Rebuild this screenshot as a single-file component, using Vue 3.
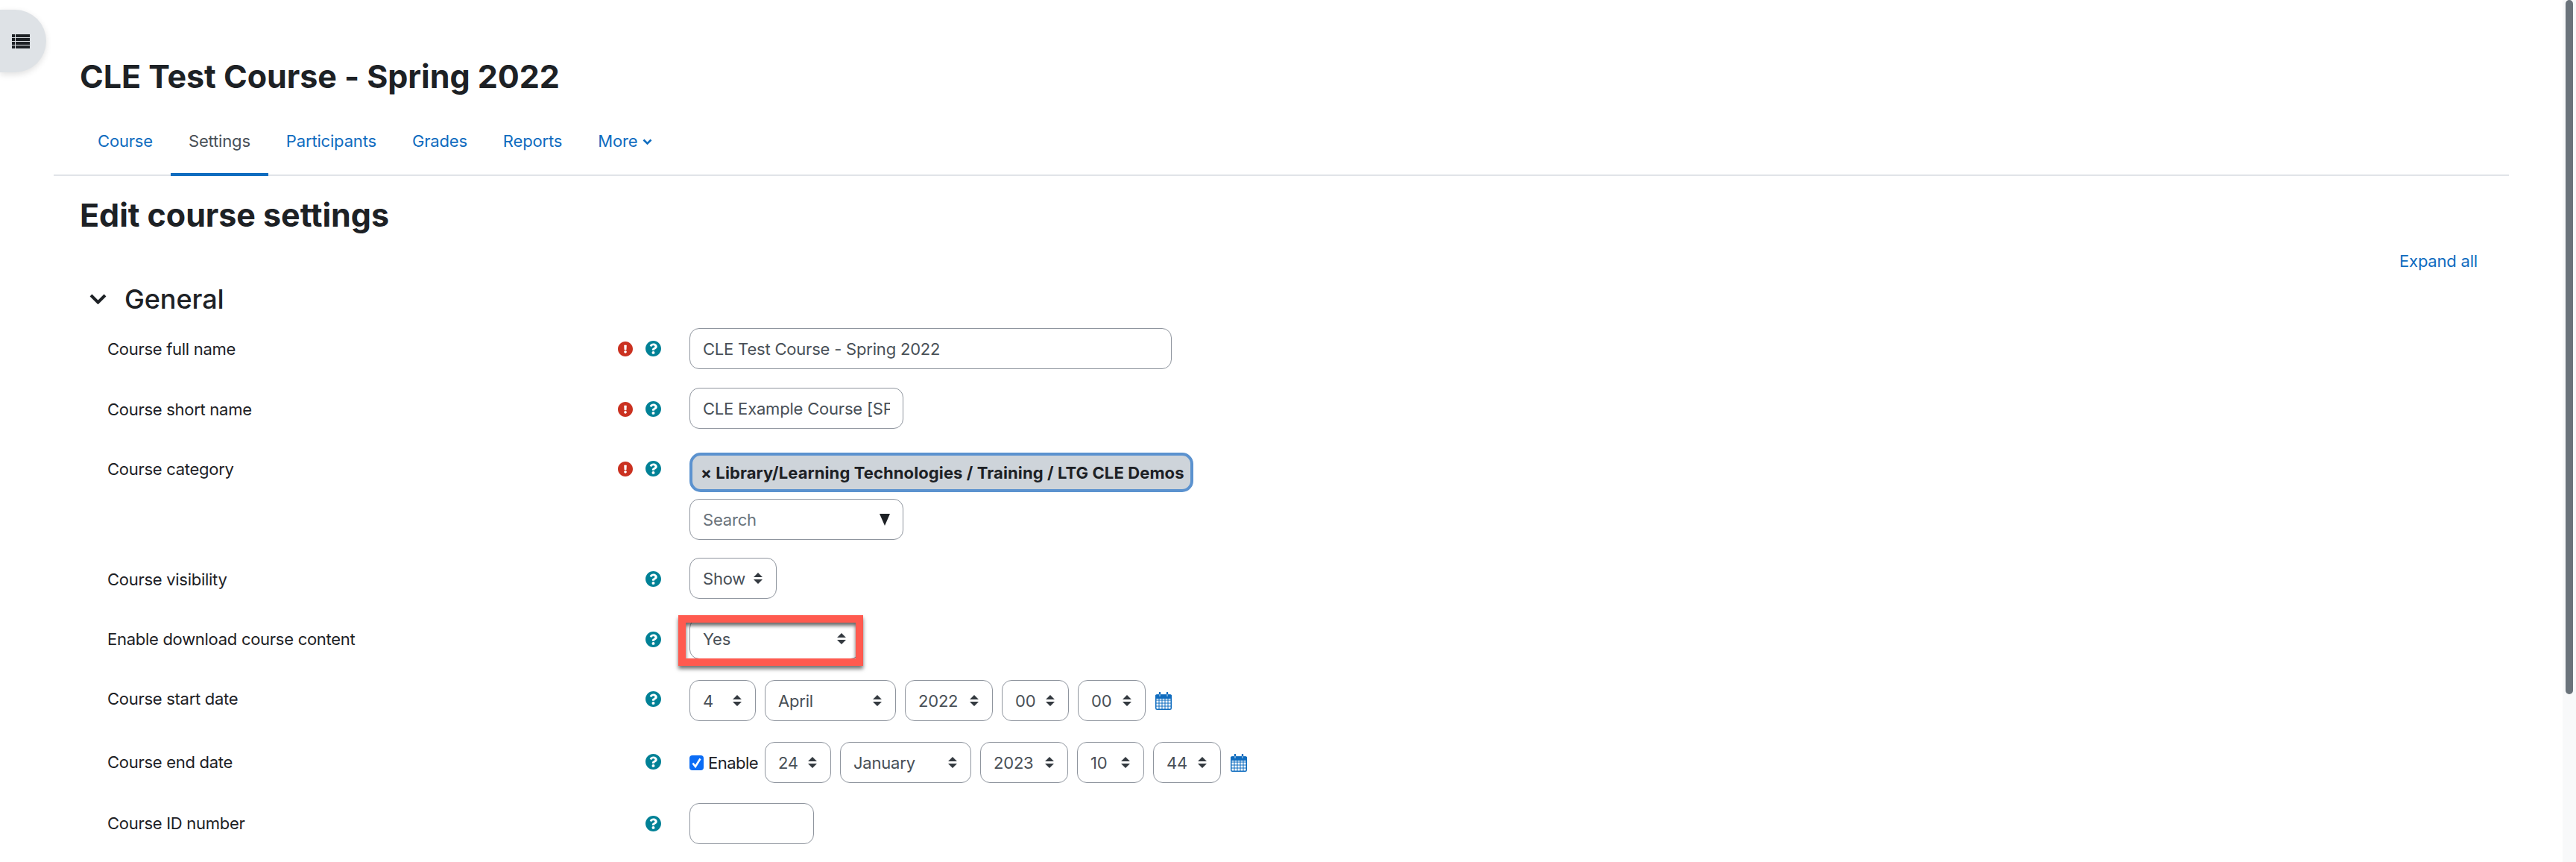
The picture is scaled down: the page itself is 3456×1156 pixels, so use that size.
<script setup>
const tabs = [
  { text: 'Course' },
  { text: 'Settings', active: true },
  { text: 'Participants' },
  { text: 'Grades' },
  { text: 'Reports' },
]
const helpPath = 'M504 256c0 136.997-111.043 248-248 248S8 392.997 8 256C8 119.083 119.043 8 256 8s248 111.083 248 248zM262.655 90c-54.497 0-89.255 22.957-116.549 63.758-3.536 5.286-2.353 12.415 2.715 16.258l34.699 26.31c5.205 3.947 12.621 3.008 16.665-2.122 17.864-22.658 30.113-35.797 57.303-35.797 20.429 0 45.698 13.148 45.698 32.958 0 14.976-12.363 22.667-32.534 33.976C247.128 238.528 216 254.941 216 296v4c0 6.627 5.373 12 12 12h56c6.627 0 12-5.373 12-12v-1.333c0-28.462 83.186-29.647 83.186-106.667 0-58.002-60.165-102-116.531-102zM256 338c-25.365 0-46 20.635-46 46 0 25.364 20.635 46 46 46s46-20.636 46-46c0-25.365-20.635-46-46-46z'
const reqPath = 'M504 256c0 136.997-111.043 248-248 248S8 392.997 8 256C8 119.083 119.043 8 256 8s248 111.083 248 248zm-248 50c-25.405 0-46 20.595-46 46s20.595 46 46 46 46-20.595 46-46-20.595-46-46-46zm-43.673-165.346l7.418 136c.347 6.364 5.609 11.346 11.982 11.346h48.546c6.373 0 11.635-4.982 11.982-11.346l7.418-136c.375-6.874-5.098-12.654-11.982-12.654h-63.383c-6.884 0-12.356 5.78-11.981 12.654z'
const startDate = [
  { v: '4', w: 89 }, { v: 'April', w: 176 }, { v: '2022', w: 118 }, { v: '00', w: 90 }, { v: '00', w: 91 },
]
const endDate = [
  { v: '24', w: 89 }, { v: 'January', w: 176 }, { v: '2023', w: 118 }, { v: '10', w: 90 }, { v: '44', w: 91 },
]
const calCols = [5, 9, 13, 17]
const calRows = [11, 15, 19]
</script>

<template>
  <div class="page">
    <button class="drawer" type="button" aria-label="Open course index">
      <svg width="24" height="19" viewBox="0 0 24 19" fill="#1d2125">
        <rect v-for="y in [0, 5, 10, 15]" :key="'a' + y" x="0" :y="y" width="4" height="4" />
        <rect v-for="y in [0, 5, 10, 15]" :key="'b' + y" x="5" :y="y" width="19" height="4" />
      </svg>
    </button>

    <div class="scrolltrack"><div class="scrollthumb"></div></div>

    <header class="head">
      <h1 class="title">CLE Test Course - Spring 2022</h1>
    </header>

    <nav class="tabs">
      <a v-for="t in tabs" :key="t.text" class="tab" :class="{ active: t.active }">{{ t.text }}</a>
      <a class="tab more">More
        <svg width="13" height="9" viewBox="0 0 13 9" fill="none" stroke="#0f6cbf" stroke-width="2.6"><path d="M1.5 1.5 6.5 6.5 11.5 1.5" /></svg>
      </a>
    </nav>

    <main class="content">
      <h2 class="heading">Edit course settings</h2>
      <div class="expand"><a>Expand all</a></div>

      <div class="section">
        <svg width="23" height="14" viewBox="0 0 23 14" fill="none" stroke="#1d2125" stroke-width="4"><path d="M2 2 11.5 11.5 21 2" /></svg>
        <h3>General</h3>
      </div>

      <div class="row r1">
        <div class="label">Course full name</div>
        <div class="ico"><svg width="20" height="20" viewBox="8 8 496 496" fill="#ca3120"><path :d="reqPath" /></svg></div>
        <div class="ico"><svg width="21" height="21" viewBox="8 8 496 496" fill="#008196"><path :d="helpPath" /></svg></div>
        <div class="ctrl"><div class="field w-full">CLE Test Course - Spring 2022</div></div>
      </div>

      <div class="row r2">
        <div class="label">Course short name</div>
        <div class="ico"><svg width="20" height="20" viewBox="8 8 496 496" fill="#ca3120"><path :d="reqPath" /></svg></div>
        <div class="ico"><svg width="21" height="21" viewBox="8 8 496 496" fill="#008196"><path :d="helpPath" /></svg></div>
        <div class="ctrl"><div class="field w-short"><span class="clip">CLE Example Course [SPRING]</span></div></div>
      </div>

      <div class="row r3">
        <div class="label">Course category</div>
        <div class="ico"><svg width="20" height="20" viewBox="8 8 496 496" fill="#ca3120"><path :d="reqPath" /></svg></div>
        <div class="ico"><svg width="21" height="21" viewBox="8 8 496 496" fill="#008196"><path :d="helpPath" /></svg></div>
        <div class="ctrl stack">
          <div class="chip">× Library/Learning Technologies / Training / LTG CLE Demos</div>
          <div class="field w-short search">
            <span>Search</span>
            <svg width="14" height="16" viewBox="0 0 14 16" fill="#1d2125"><path d="M0 0H14L7 16Z" /></svg>
          </div>
        </div>
      </div>

      <div class="row r4">
        <div class="label">Course visibility</div>
        <div class="ico"></div>
        <div class="ico"><svg width="21" height="21" viewBox="8 8 496 496" fill="#008196"><path :d="helpPath" /></svg></div>
        <div class="ctrl">
          <div class="select w-show">Show
            <svg class="updown" width="12" height="15" viewBox="0 0 12 15" fill="#343a40"><path d="M6 0 12 6H0ZM6 15 0 9H12Z" /></svg>
          </div>
        </div>
      </div>

      <div class="row r5">
        <div class="label">Enable download course content</div>
        <div class="ico"></div>
        <div class="ico"><svg width="21" height="21" viewBox="8 8 496 496" fill="#008196"><path :d="helpPath" /></svg></div>
        <div class="ctrl">
          <div class="select w-yes">Yes
            <svg class="updown" width="12" height="15" viewBox="0 0 12 15" fill="#343a40"><path d="M6 0 12 6H0ZM6 15 0 9H12Z" /></svg>
          </div>
          <div class="callout"></div>
        </div>
      </div>

      <div class="row r6">
        <div class="label">Course start date</div>
        <div class="ico"></div>
        <div class="ico"><svg width="21" height="21" viewBox="8 8 496 496" fill="#008196"><path :d="helpPath" /></svg></div>
        <div class="ctrl inline">
          <div v-for="(s, i) in startDate" :key="i" class="select" :style="{ width: s.w + 'px' }">{{ s.v }}
            <svg class="updown" width="12" height="15" viewBox="0 0 12 15" fill="#343a40"><path d="M6 0 12 6H0ZM6 15 0 9H12Z" /></svg>
          </div>
          <svg class="cal" width="22" height="24" viewBox="0 0 22 24">
            <rect x="0.75" y="4" width="20.5" height="19.25" rx="1.5" fill="#fff" stroke="#0f6cbf" stroke-width="1.5" />
            <rect x="0" y="3.5" width="22" height="5.5" rx="1.5" fill="#0f6cbf" />
            <path d="M6 1v6M16 1v6" stroke="#0f6cbf" stroke-width="2.4" stroke-linecap="round" />
            <path d="M6 3v3M16 3v3" stroke="#fff" stroke-width="0.8" />
            <path v-for="x in calCols" :key="'x' + x" :d="`M${x} 9V23`" stroke="#0f6cbf" stroke-width="1" />
            <path v-for="y in calRows" :key="'y' + y" :d="`M1 ${y}H21`" stroke="#0f6cbf" stroke-width="1" />
          </svg>
        </div>
      </div>

      <div class="row r7">
        <div class="label">Course end date</div>
        <div class="ico"></div>
        <div class="ico"><svg width="21" height="21" viewBox="8 8 496 496" fill="#008196"><path :d="helpPath" /></svg></div>
        <div class="ctrl inline">
          <div class="check">
            <svg width="19" height="20" viewBox="0 0 19 20">
              <rect width="19" height="20" rx="4" fill="#0b6cf5" />
              <path d="M4.5 10.5 8 15 14.5 4.5" fill="none" stroke="#fff" stroke-width="2.6" />
            </svg>
            <span>Enable</span>
          </div>
          <div v-for="(s, i) in endDate" :key="i" class="select" :style="{ width: s.w + 'px' }">{{ s.v }}
            <svg class="updown" width="12" height="15" viewBox="0 0 12 15" fill="#343a40"><path d="M6 0 12 6H0ZM6 15 0 9H12Z" /></svg>
          </div>
          <svg class="cal" width="22" height="24" viewBox="0 0 22 24">
            <rect x="0.75" y="4" width="20.5" height="19.25" rx="1.5" fill="#fff" stroke="#0f6cbf" stroke-width="1.5" />
            <rect x="0" y="3.5" width="22" height="5.5" rx="1.5" fill="#0f6cbf" />
            <path d="M6 1v6M16 1v6" stroke="#0f6cbf" stroke-width="2.4" stroke-linecap="round" />
            <path d="M6 3v3M16 3v3" stroke="#fff" stroke-width="0.8" />
            <path v-for="x in calCols" :key="'x' + x" :d="`M${x} 9V23`" stroke="#0f6cbf" stroke-width="1" />
            <path v-for="y in calRows" :key="'y' + y" :d="`M1 ${y}H21`" stroke="#0f6cbf" stroke-width="1" />
          </svg>
        </div>
      </div>

      <div class="row r8">
        <div class="label">Course ID number</div>
        <div class="ico"></div>
        <div class="ico"><svg width="21" height="21" viewBox="8 8 496 496" fill="#008196"><path :d="helpPath" /></svg></div>
        <div class="ctrl"><div class="field w-id"></div></div>
      </div>
    </main>
  </div>
</template>

<style>
html, body { margin: 0; background: #fff; overflow: hidden; }
</style>

<style scoped>
.page {
  position: relative;
  width: 3456px;
  height: 1156px;
  overflow: hidden;
  background: #fff;
  color: #1d2125;
  font-family: Inter, "Liberation Sans", sans-serif;
  font-size: 22px;
  box-sizing: border-box;
  padding-top: 77px;
}
.drawer {
  position: absolute;
  left: 0;
  top: 13px;
  width: 62px;
  height: 84px;
  padding: 0 0 0 16px;
  border: 0;
  border-radius: 0 42px 42px 0;
  background: #dee2e6;
  box-shadow: 0 3px 8px rgba(0, 0, 0, 0.12);
  display: flex;
  align-items: center;
  box-sizing: border-box;
}
.scrolltrack {
  position: absolute;
  right: 0;
  top: 0;
  width: 18px;
  height: 1156px;
  background: #f8f9fa;
}
.scrollthumb {
  margin-left: 4px;
  width: 10px;
  height: 931px;
  background: #6a737b;
  border-radius: 5px;
}
.head { padding-left: 107px; }
.title {
  margin: 0;
  font-size: 43px;
  line-height: 50px;
  font-weight: 700;
  letter-spacing: -0.05px;
}
.tabs {
  margin: 18px 90px 0 72px;
  padding-left: 35px;
  height: 89px;
  border-bottom: 2px solid #e1e4e8;
  display: flex;
}
.tab {
  padding: 0 24px;
  height: 91px;
  line-height: 89px;
  color: #0f6cbf;
  box-sizing: border-box;
  letter-spacing: -0.17px;
  white-space: nowrap;
}
.tab.active {
  color: #495057;
  border-bottom: 4px solid #0f6cbf;
}
.more svg { margin-left: 1px; vertical-align: 2px; }
.content { padding-left: 107px; }
.heading {
  margin: 27px 0 0;
  font-size: 43px;
  line-height: 50px;
  font-weight: 700;
  letter-spacing: -0.05px;
}
.expand {
  margin-top: 22px;
  padding-right: 132px;
  height: 30px;
  line-height: 30px;
  text-align: right;
  color: #0f6cbf;
  letter-spacing: -0.2px;
}
.section {
  margin-top: 14px;
  height: 44px;
  padding-left: 13px;
  display: flex;
  align-items: center;
  gap: 24px;
}
.section h3 {
  margin: 0;
  font-size: 36px;
  line-height: 44px;
  font-weight: 500;
  letter-spacing: -0.1px;
}
.row {
  margin-left: 37px;
  display: grid;
  grid-template-columns: 685px 37px 59px 1fr;
  height: 55px;
  --mid: 56px;
}
.r1 { margin-top: 17px; --mid: 55px; }
.r2 { margin-top: 25px; --mid: 57px; }
.r3 { margin-top: 32px; height: 116px; --mid: 43px; }
.r4 { margin-top: 25px; --mid: 57px; }
.r5 { margin-top: 26px; --mid: 56px; }
.r6 { margin-top: 28px; --mid: 50px; }
.r7 { margin-top: 28px; --mid: 53px; }
.r8 { margin-top: 27px; --mid: 54px; }
.label {
  height: var(--mid);
  display: flex;
  align-items: center;
  color: #1d2125;
  letter-spacing: -0.28px;
}
.ico {
  height: var(--mid);
  display: flex;
  align-items: center;
}
.ctrl { position: relative; }
.stack {
  display: flex;
  flex-direction: column;
  gap: 9px;
}
.inline {
  display: flex;
  gap: 12px;
  align-items: flex-start;
}
.field, .select {
  position: relative;
  box-sizing: border-box;
  height: 55px;
  border: 1.5px solid #8f959e;
  border-radius: 13px;
  padding: 0 17px;
  display: flex;
  align-items: center;
  color: #495057;
  background: #fff;
  letter-spacing: -0.2px;
  white-space: nowrap;
}
.w-full { width: 647px; }
.w-short { width: 287px; }
.w-id { width: 167px; }
.w-show { width: 117px; }
.w-yes { width: 229px; }
.clip {
  display: block;
  overflow: hidden;
  width: 252px;
}
.search {
  justify-content: space-between;
  color: #6a737b;
}
.chip {
  width: 676px;
  height: 53px;
  box-sizing: border-box;
  border: 4px solid #5b92cf;
  border-radius: 15px;
  background: #ced4da;
  padding-left: 11px;
  display: flex;
  align-items: center;
  font-weight: 700;
  color: #1d2125;
  letter-spacing: 0.1px;
  white-space: nowrap;
}
.updown {
  position: absolute;
  right: 18px;
  top: 50%;
  margin-top: -8px;
}
.callout {
  position: absolute;
  left: -15px;
  top: -4px;
  width: 248px;
  height: 68px;
  box-sizing: border-box;
  border: solid #ff5a4f;
  border-width: 10px;
  box-shadow: 0 4px 5px rgba(0, 0, 0, 0.55), inset 0 4px 5px rgba(0, 0, 0, 0.6);
}
.cal { margin-left: 1px; align-self: center; }
.check {
  width: 89px;
  display: flex;
  align-items: center;
  gap: 6px;
  height: 55px;
  letter-spacing: -0.5px;
  white-space: nowrap;
}
.check svg { flex: none; }
</style>
